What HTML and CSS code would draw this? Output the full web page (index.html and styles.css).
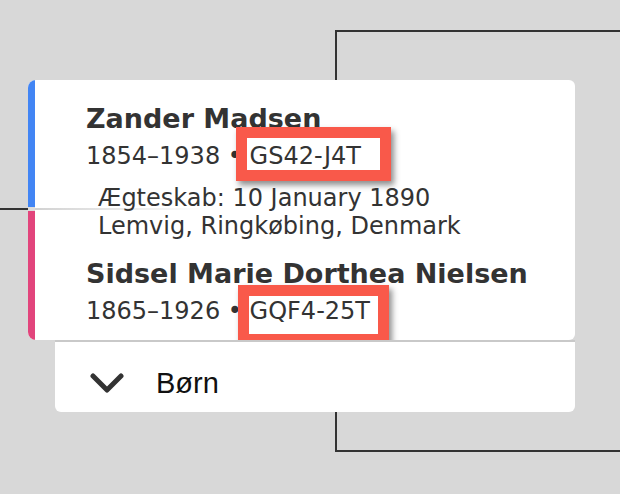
FILE: index.html
```html
<!DOCTYPE html>
<html lang="da">
<head>
    <meta charset="UTF-8">
    <meta name="viewport" content="width=device-width, initial-scale=1.0">
    <title>Familie</title>
    <link rel="stylesheet" href="styles.css">
</head>
<body>
    <!-- Linjer i stamtræet bag kortet -->
    <div class="linje linje-forfaedre"></div>
    <div class="linje linje-venstre"></div>

    <div class="familie">
        <div class="kort">
            <div class="stribe"></div>
            <div class="indhold">
                <div class="person">
                    <h2 class="navn">Zander Madsen</h2>
                    <p class="datoer">1854–1938 • <span class="id id-mand">GS42-J4T</span></p>
                </div>

                <div class="aegteskab">
                    <p>Ægteskab: 10 January 1890</p>
                    <p>Lemvig, Ringkøbing, Denmark</p>
                </div>

                <div class="person person-hustru">
                    <h2 class="navn">Sidsel Marie Dorthea Nielsen</h2>
                    <p class="datoer">1865–1926 • <span class="id id-hustru">GQF4-25T</span></p>
                </div>
            </div>
        </div>

        <div class="boern">
            <svg class="pil" width="34" height="20" viewBox="0 0 34 20">
                <polyline points="3,3 17,17 31,3" fill="none" stroke="#333" stroke-width="5" stroke-linecap="round" stroke-linejoin="round"/>
            </svg>
            <span>Børn</span>
        </div>
    </div>
</body>
</html>
```

FILE: styles.css
```css
body {
    margin: 0;
    padding: 80px 0 0 28px;
    background-color: #d8d8d8;
    font-family: "DejaVu Sans", Verdana, sans-serif;
    color: #333;
    height: 414px;
    overflow: hidden;
}

p, h2 {
    margin: 0;
}

/* linjer i træet */
.linje {
    position: absolute;
    background-color: #333;
}
.linje-forfaedre {
    top: 30px;
    left: 335px;
    width: 300px;
    height: 418px;
    background: none;
    border-top: 2px solid #333;
    border-left: 2px solid #333;
    border-bottom: 2px solid #333;
}
.linje-venstre {
    top: 208px;
    left: 0;
    width: 30px;
    height: 2px;
}

.familie {
    position: relative;
    width: 547px;
}

.kort {
    display: flex;
    background-color: #ffffff;
    border-radius: 8px 6px 6px 8px;
    overflow: hidden;
    height: 260px;
}

.stribe {
    width: 7px;
    flex-shrink: 0;
    background: linear-gradient(#4285f4 0 127px, #dcdcdc 127px 131px, #e2457c 131px);
}

.indhold {
    padding: 22px 0 0 51px;
}

.navn {
    font-size: 27px;
    line-height: 34px;
    font-weight: bold;
    margin-bottom: 5px;
}

.datoer {
    font-size: 24px;
    line-height: 30px;
}

.person-hustru {
    margin-top: 17px;
}

.aegteskab {
    position: relative;
    margin: 13px 0 0 12px;
    font-size: 24px;
    line-height: 28px;
}
.aegteskab p {
    position: relative;
}
.aegteskab::before {
    content: '';
    position: absolute;
    top: 24px;
    left: -63px;
    width: 170px;
    height: 2px;
    background: linear-gradient(to right, #d2d2d2, #ffffff);
}

/* røde markeringer over id'erne */
.id {
    position: relative;
}
.id::after {
    content: '';
    position: absolute;
    border: 11px solid #f9594a;
    box-shadow: 3px 4px 6px rgba(0, 0, 0, 0.45);
}
.id-mand::after {
    left: -14px;
    top: -15px;
    width: 133px;
    height: 32px;
}
.id-hustru::after {
    left: -12px;
    top: -12px;
    width: 129px;
    height: 38px;
}

.boern {
    display: flex;
    align-items: center;
    gap: 32px;
    margin-left: 27px;
    height: 58px;
    padding: 12px 0 0 35px;
    background-color: #ffffff;
    border-top: 2px solid #c9c9c9;
    border-radius: 0 0 6px 6px;
    font-family: "Liberation Sans", Arial, sans-serif;
    font-size: 29px;
    color: #111;
}
```
